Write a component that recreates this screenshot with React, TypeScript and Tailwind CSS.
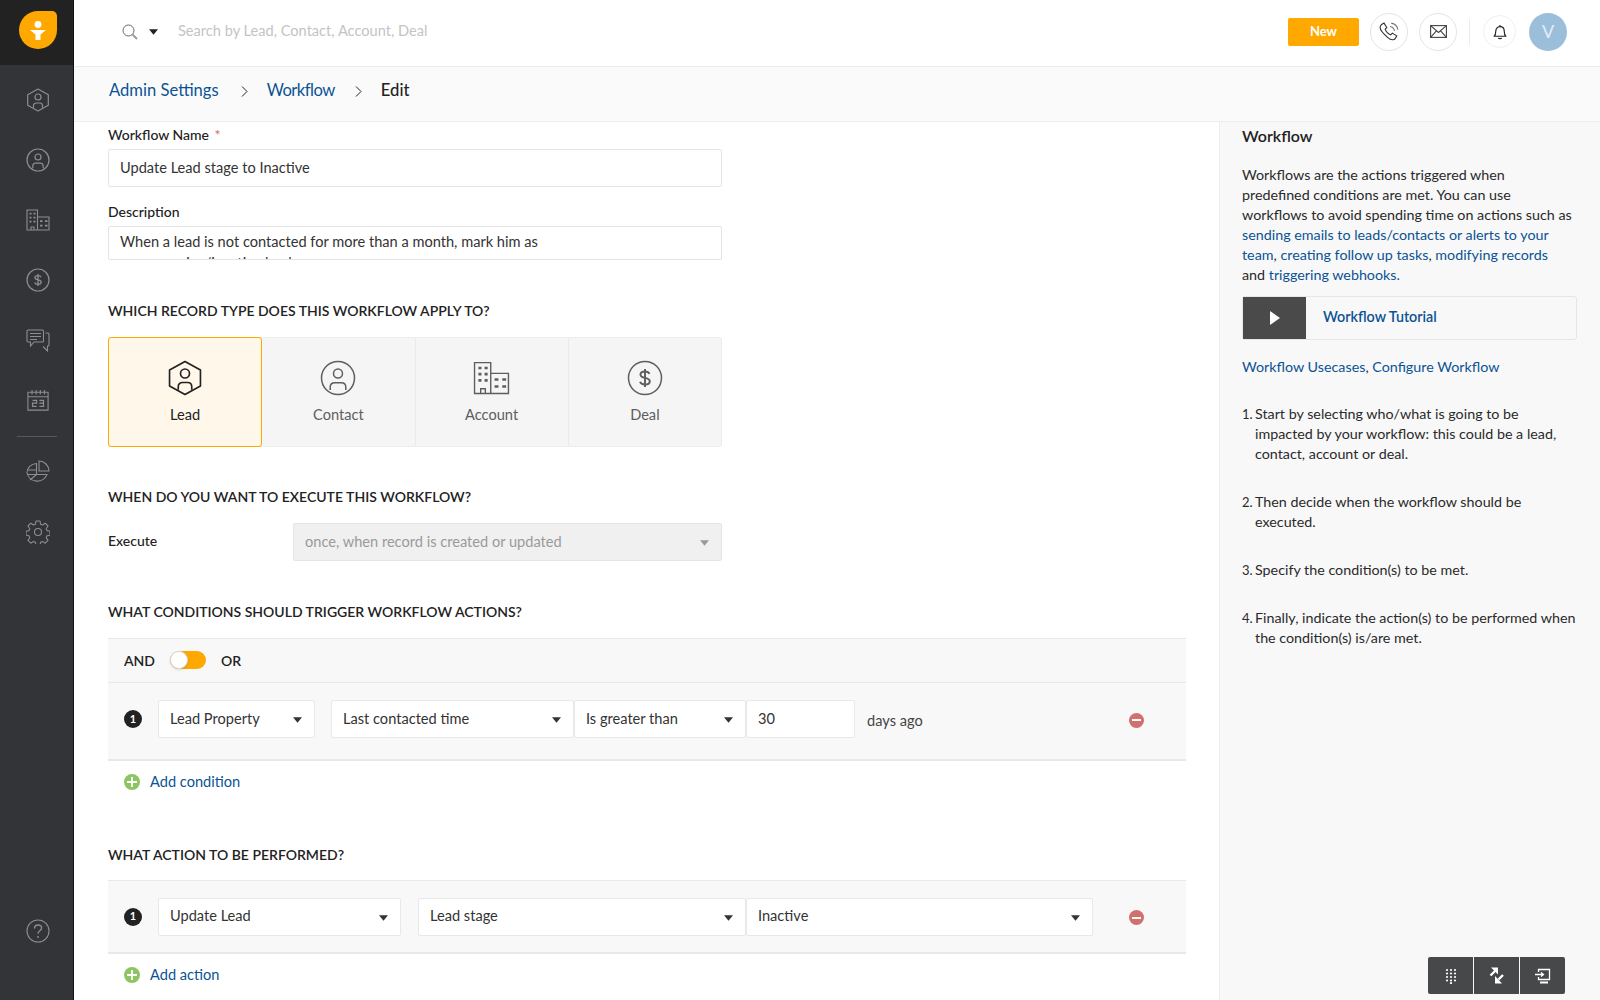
import React from "react";

const Caret = ({ className = "" }: { className?: string }) => (
  <svg width="9" height="6" viewBox="0 0 10 6" className={className}>
    <path d="M0 0h10L5 6z" fill="currentColor" />
  </svg>
);

const LeadIcon = ({ size = 24, stroke = "currentColor", sw = 1.2 }: { size?: number; stroke?: string; sw?: number }) => (
  <svg width={size} height={size} viewBox="0 0 24 24" fill="none" stroke={stroke} strokeWidth={sw}>
    <path d="M12 1l10.300 5.700v10.600L12 23 1.700 17.300V6.700z" strokeLinejoin="round" />
    <circle cx="12" cy="9" r="3" />
    <path d="M7.500 19.800v-2c0-1.700 1.200-2.800 2.800-2.800h3.400c1.600 0 2.800 1.100 2.800 2.800v2" />
  </svg>
);

const ContactIcon = ({ size = 24, stroke = "currentColor", sw = 1.2 }: { size?: number; stroke?: string; sw?: number }) => (
  <svg width={size} height={size} viewBox="0 0 24 24" fill="none" stroke={stroke} strokeWidth={sw}>
    <circle cx="12" cy="12" r="11" />
    <circle cx="12" cy="9" r="3" />
    <path d="M6.800 20v-1.800c0-1.800 1.300-3 3-3h4.400c1.700 0 3 1.200 3 3V20" />
  </svg>
);

const AccountIcon = ({ size = 24, stroke = "currentColor", sw = 1.1 }: { size?: number; stroke?: string; sw?: number }) => (
  <svg width={size} height={size * 0.92} viewBox="0 0 24 22" fill="none" stroke={stroke} strokeWidth={sw}>
    <path d="M1 21V1h10.500v20zM11.500 8H23v13H11.500z" />
    <path d="M5 21v-3h3v3" />
    <path d="M3.500 4.500h2M7.500 4.500h2M3.500 8.500h2M7.500 8.500h2M3.500 12.500h2M7.500 12.500h2M14 12h2.500M19 12h2.500M14 16.500h2.500M19 16.500h2.500" strokeWidth={1.7} />
  </svg>
);

const DealIcon = ({ size = 24, stroke = "currentColor", sw = 1.2 }: { size?: number; stroke?: string; sw?: number }) => (
  <svg width={size} height={size} viewBox="0 0 24 24" fill="none" stroke={stroke} strokeWidth={sw}>
    <circle cx="12" cy="12" r="11" />
    <path d="M15 9.300c-.4-1-1.400-1.600-3-1.600-1.800 0-3 .8-3 2.100 0 2.900 6.200 1.300 6.200 4.300 0 1.400-1.300 2.200-3.200 2.200-1.700 0-2.900-.7-3.300-1.800M12 6v12" strokeWidth={1.300} />
  </svg>
);

const ChatIcon = () => (
  <svg width="24" height="23" viewBox="0 0 24 23" fill="none" stroke="#8c8e90" strokeWidth="1.100">
    <path d="M2 1h14.500a1 1 0 0 1 1 1v10a1 1 0 0 1-1 1H8l-3.500 4v-4H2a1 1 0 0 1-1-1V2a1 1 0 0 1 1-1z" />
    <path d="M4 4.500h11M4 7.500h11M4 10.500h7" />
    <path d="M19.500 4H22a1 1 0 0 1 1 1v11a1 1 0 0 1-1 1h-.5v5L17 17.500" />
  </svg>
);

const CalendarIcon = () => (
  <svg width="22" height="22" viewBox="0 0 24 24" fill="none" stroke="#8c8e90" strokeWidth="1.200">
    <path d="M1 3.500h22V23H1zM1 8.500h22" />
    <path d="M5.500 1v5M10 1v5M14.500 1v5M19 1v5" />
    <path d="M6 12.500h4.500v3H6v3.500h4.500M13.500 12.500H18V19h-4.500M13.500 15.500H18" strokeWidth="1.300" />
  </svg>
);

const PieIcon = () => (
  <svg width="24" height="24" viewBox="0 0 24 24" fill="none" stroke="#8c8e90" strokeWidth="1.100">
    <path d="M13 1c5.500.2 9.800 4.500 10 10H13z" />
    <path d="M10.500 3.500C5 3.800 1 8 1 13a10.500 10.500 0 0 0 20 1.500H10.500z" />
    <path d="M1.500 10h9M1.500 14.500h9M4 20l6.500-5.500" />
  </svg>
);

const GearIcon = () => (
  <svg width="24" height="24" viewBox="0 0 24 24" fill="none" stroke="#8c8e90" strokeWidth="1.100">
    <circle cx="12" cy="12" r="3.500" />
    <path d="M10 1h4l.6 3.200 1.900.8 2.700-1.800 2.800 2.800-1.800 2.700.8 1.900 3 .6v4l-3 .6-.8 1.900 1.800 2.700-2.800 2.800-2.700-1.800-1.900.8-.6 3.200h-4l-.6-3.200-1.900-.8-2.700 1.800-2.800-2.800 1.800-2.700-.8-1.900-3-.6v-4l3-.6.8-1.900L2 6l2.800-2.800L7.500 5l1.900-.8z" strokeLinejoin="round" />
  </svg>
);

const HelpIcon = () => (
  <svg width="24" height="24" viewBox="0 0 24 24" fill="none" stroke="#8c8e90" strokeWidth="1.100">
    <circle cx="12" cy="12" r="11" />
    <path d="M8.500 9.500c0-2.200 1.500-3.500 3.600-3.500 2 0 3.500 1.200 3.500 3 0 2.800-3.600 2.800-3.600 5.800" strokeWidth="1.300" />
    <circle cx="12" cy="18" r=".9" fill="#8c8e90" stroke="none" />
  </svg>
);

const Logo = () => (
  <div className="w-[38px] h-[38px] bg-[#ffa800] rounded-tl-[19px] rounded-bl-[19px] rounded-br-[19px] rounded-tr-[5px] flex items-center justify-center">
    <svg width="16" height="19" viewBox="0 0 16 19" fill="white">
      <circle cx="8" cy="3.500" r="3.400" />
      <path d="M0 9h16l-5.500 4.500V19h-5v-5.500z" />
    </svg>
  </div>
);

const Select = ({ text, className = "", muted = false }: { text: string; className?: string; muted?: boolean }) => (
  <div className={`h-[38px] flex items-center justify-between pl-[11px] pr-[12px] border rounded-[2px] text-[14.600px] ${muted ? "bg-[#f0f0f0] border-[#e4e4e4] text-[#9a9a9a]" : "bg-white border-[#e8e8e8] text-[#333]"} ${className}`}>
    <span className="pb-[1px]">{text}</span>
    <Caret className={`mt-[2px] ${muted ? "text-[#9a9a9a]" : "text-[#333]"}`} />
  </div>
);

const Badge = () => (
  <div className="w-[18px] h-[18px] shrink-0 rounded-full bg-[#222] text-white text-[11px] font-bold flex items-center justify-center">1</div>
);

const Minus = () => (
  <div className="w-[15px] h-[15px] rounded-full bg-[#d26f6f] flex items-center justify-center">
    <div className="w-[9px] h-[2px] bg-white" />
  </div>
);

const AddLink = ({ text }: { text: string }) => (
  <div className="flex items-center gap-[10px] pl-[16px]">
    <div className="relative w-[16px] h-[16px] rounded-full bg-[#8cc561]">
      <div className="absolute left-[3px] top-[7px] w-[10px] h-[2px] bg-white" />
      <div className="absolute left-[7px] top-[3px] w-[2px] h-[10px] bg-white" />
    </div>
    <span className="text-[14.600px] text-[#0b5394]">{text}</span>
  </div>
);

const Heading = ({ children, className = "" }: { children: React.ReactNode; className?: string }) => (
  <div className={`text-[14px] leading-[20px] font-semibold text-[#222] ${className}`}>{children}</div>
);

const navTop = [
  <LeadIcon key="l" stroke="#8c8e90" />,
  <ContactIcon key="c" stroke="#8c8e90" />,
  <AccountIcon key="a" stroke="#8c8e90" />,
  <DealIcon key="d" stroke="#8c8e90" />,
  <ChatIcon key="m" />,
  <CalendarIcon key="e" />,
];

const records = [
  { name: "Lead", icon: <LeadIcon size={36} sw={1.100} />, on: true },
  { name: "Contact", icon: <ContactIcon size={36} sw={1} />, on: false },
  { name: "Account", icon: <AccountIcon size={37} sw={0.9} />, on: false },
  { name: "Deal", icon: <DealIcon size={36} sw={1} />, on: false },
];

const steps = [
  { t: "Start by selecting who/what is going to be impacted by your workflow: this could be a lead, contact, account or deal." },
  { t: "Then decide when the workflow should be executed." },
  { t: "Specify the condition(s) to be met." },
  { t: "Finally, indicate the action(s) to be performed when the condition(s) is/are met." },
];

export default function App() {
  return (
    <div className="flex h-[1000px] w-[1600px] overflow-hidden bg-white text-[#222] font-['Lato','Open_Sans',sans-serif]">
      {/* sidebar */}
      <div className="w-[74px] shrink-0 h-full bg-[#323437] border-r border-[#111] flex flex-col items-center">
        <div className="h-[65px] w-full bg-[#222222] flex items-center justify-center pl-[2px] pb-[5px]">
          <Logo />
        </div>
        <div className="flex flex-col items-center mt-[5px] pl-[2px]">
          {navTop.map((icon, i) => (
            <div key={i} className="h-[60px] flex items-center justify-center">{icon}</div>
          ))}
        </div>
        <div className="w-[40px] h-px bg-[#56585a] mt-[6px]" />
        <div className="h-[60px] mt-[5px] pl-[2px] flex items-center"><PieIcon /></div>
        <div className="h-[60px] pl-[2px] flex items-center"><GearIcon /></div>
        <div className="mt-auto mb-[57px] pl-[2px]"><HelpIcon /></div>
      </div>

      <div className="flex-1 min-w-0 flex flex-col">
        {/* top bar */}
        <div className="h-[67px] shrink-0 border-b border-[#eeeeee] flex items-center pl-[48px] pr-[33px] pb-[3px]">
          <svg width="16" height="16" viewBox="0 0 16 16" fill="none" stroke="#666" strokeWidth="1">
            <circle cx="6.500" cy="6.500" r="5.500" />
            <path d="M10.500 10.500l4.500 4.500" strokeWidth="1.800" stroke="#999" />
          </svg>
          <Caret className="ml-[11px] text-[#222]" />
          <span className="ml-[20px] pb-[1px] text-[14.600px] text-[#c4c4c4]">Search by Lead, Contact, Account, Deal</span>
          <div className="ml-auto w-[71px] h-[28px] bg-[#ffa800] rounded-[2px] text-white text-[13px] font-bold flex items-center justify-center">New</div>
          <div className="ml-[11px] w-[38px] h-[38px] rounded-full border border-[#e4e4e4] flex items-center justify-center">
            <svg width="20" height="20" viewBox="0 0 18 18" fill="none" stroke="#333" strokeWidth="1">
              <path d="M2 2.500L4.500 1l2.500 4-1.500 1.500c.5 2 3 4.500 5 5L12 10l4 2.500-1.500 2.500c-1 1.500-3.500 1.500-6.500-1S1 7 1 5c0-1 .3-1.800 1-2.500z" />
              <path d="M10 4c2 .3 3.500 1.800 4 4M11 1c3 .5 5.500 3 6 6" stroke="#777" />
            </svg>
          </div>
          <div className="ml-[11px] w-[38px] h-[38px] rounded-full border border-[#e4e4e4] flex items-center justify-center">
            <svg width="17" height="13" viewBox="0 0 17 13" fill="none" stroke="#444" strokeWidth="1.100">
              <rect x=".6" y=".6" width="15.800" height="11.800" />
              <path d="M.6.6l7.900 6.800L16.400.6M.6 12.400l5.800-6.500M16.400 12.400l-5.800-6.500" />
            </svg>
          </div>
          <div className="ml-[12px] w-px h-[26px] bg-[#ececec]" />
          <div className="ml-[13px] w-[33px] h-[33px] rounded-full border border-[#efefef] flex items-center justify-center">
            <svg width="14" height="16" viewBox="0 0 13 15" fill="none" stroke="#222" strokeWidth="1.100">
              <path d="M1 11.500c1.200-1 1.500-2 1.500-4.500 0-2.500 1.500-4.500 4-4.500s4 2 4 4.500c0 2.500.3 3.500 1.500 4.500z" strokeLinejoin="round" />
              <path d="M5 13c.3 1 2.700 1 3 0M6.500 2.500V1" />
            </svg>
          </div>
          <div className="ml-[13px] w-[38px] h-[38px] rounded-full bg-[#9bbedb] text-[#e3edf5] text-[18px] flex items-center justify-center">V</div>
        </div>

        {/* breadcrumb */}
        <div className="h-[55px] shrink-0 bg-[#fafafa] border-b border-[#eeeeee] flex items-center pl-[35px] text-[16.600px] pb-[7px]">
          <span className="text-[#0b5394]">Admin Settings</span>
          <svg width="7" height="11" viewBox="0 0 7 11" fill="none" stroke="#222" className="ml-[22px] mr-[19px] mt-[2px]"><path d="M1 .5l5 5-5 5" /></svg>
          <span className="text-[#0b5394] tracking-[-0.5px]">Workflow</span>
          <svg width="7" height="11" viewBox="0 0 7 11" fill="none" stroke="#222" className="ml-[20px] mr-[19px] mt-[2px]"><path d="M1 .5l5 5-5 5" /></svg>
          <span className="text-[#222] font-medium">Edit</span>
        </div>

        <div className="flex-1 min-h-0 flex">
          {/* form */}
          <div className="flex-1 min-w-0 pl-[34px] pr-[33px] overflow-hidden">
            <div className="w-[614px]">
              <div className="mt-[3px] h-[20px] text-[14px] leading-[20px] font-medium">
                Workflow Name <span className="text-[#d26f6f] ml-[2px]">*</span>
              </div>
              <div className="mt-[4px] h-[38px] border border-[#e4e4e4] rounded-[2px] flex items-center pl-[11px] pb-[1px] text-[14.600px] text-[#333]">
                Update Lead stage to Inactive
              </div>
              <div className="mt-[15px] h-[20px] text-[14px] leading-[20px] font-medium">Description</div>
              <div className="mt-[4px] h-[34px] border border-[#e4e4e4] rounded-[2px] overflow-hidden pl-[11px] pr-[100px] pt-[4px] text-[14.600px] leading-[21px] text-[#333]">
                When a lead is not contacted for more than a month, mark him as unresponsive/inactive lead
              </div>

              <Heading className="mt-[41px]">WHICH RECORD TYPE DOES THIS WORKFLOW APPLY TO?</Heading>
              <div className="mt-[16px] h-[110px] flex rounded-[3px] bg-[#f5f5f5] border border-[#ececec]">
                {records.map((r) => (
                  <div
                    key={r.name}
                    className={`flex-1 flex flex-col items-center pt-[22px] ${
                      r.on
                        ? "bg-[#fff8ea] border border-[#ffa800] rounded-[3px] -my-px -ml-px text-[#222]"
                        : "border-r border-[#eaeaea] last:border-r-0 text-[#5e5e5e]"
                    }`}
                  >
                    <div className="h-[36px] flex items-center">{r.icon}</div>
                    <div className="mt-[8px] text-[14.600px] leading-[22px]">{r.name}</div>
                  </div>
                ))}
              </div>

              <Heading className="mt-[40px]">WHEN DO YOU WANT TO EXECUTE THIS WORKFLOW?</Heading>
              <div className="mt-[16px] flex items-center">
                <div className="w-[185px] text-[14px] font-medium pb-[3px]">Execute</div>
                <Select muted text="once, when record is created or updated" className="flex-1" />
              </div>
            </div>

            <Heading className="mt-[41px]">WHAT CONDITIONS SHOULD TRIGGER WORKFLOW ACTIONS?</Heading>
            <div className="mt-[16px] w-[1078px] bg-[#f8f8f8] border-t border-b-2 border-[#e8e8e8]">
              <div className="h-[44px] flex items-center pl-[16px] pb-[1px] border-b border-[#e8e8e8] text-[14px] font-semibold">
                <span>AND</span>
                <div className="relative ml-[15px] w-[36px] h-[18px] rounded-full bg-[#ffa800]">
                  <div className="absolute left-0 top-0 w-[18px] h-[18px] rounded-full bg-white border border-[#ddd] shadow-sm" />
                </div>
                <span className="ml-[15px]">OR</span>
              </div>
              <div className="h-[76px] flex items-center pl-[16px] pb-[4px]">
                <Badge />
                <Select text="Lead Property" className="ml-[16px] w-[157px]" />
                <Select text="Last contacted time" className="ml-[16px] w-[243px]" />
                <Select text="Is greater than" className="w-[172px]" />
                <div className="w-[109px] h-[38px] bg-white border border-[#e8e8e8] rounded-[2px] flex items-center pl-[11px] pb-[1px] text-[14.600px] text-[#333]">30</div>
                <span className="ml-[12px] mt-[3px] text-[14.600px] text-[#444]">days ago</span>
                <div className="ml-auto mr-[42px] mt-[2px]"><Minus /></div>
              </div>
            </div>
            <div className="mt-[10px] h-[22px]"><AddLink text="Add condition" /></div>

            <Heading className="mt-[52px]">WHAT ACTION TO BE PERFORMED?</Heading>
            <div className="mt-[15px] w-[1078px] h-[74px] bg-[#f8f8f8] border-t border-b-2 border-[#e8e8e8] flex items-center pl-[16px]">
              <Badge />
              <Select text="Update Lead" className="ml-[16px] w-[243px]" />
              <Select text="Lead stage" className="ml-[17px] w-[328px]" />
              <Select text="Inactive" className="w-[347px]" />
              <div className="ml-auto mr-[42px] mt-[2px]"><Minus /></div>
            </div>
            <div className="mt-[10px] h-[22px]"><AddLink text="Add action" /></div>
          </div>

          {/* help panel */}
          <div className="relative w-[381px] shrink-0 bg-[#f8f8f8] border-l border-[#eeeeee] pl-[22px] pr-[20px] text-[14.300px] leading-[20px] text-[#2a2a2a]">
            <div className="mt-[2px] h-[24px] text-[16px] leading-[24px] font-semibold text-[#222]">Workflow</div>
            <p className="mt-[17px]">
              Workflows are the actions triggered when<br />
              predefined conditions are met. You can use<br />
              workflows to avoid spending time on actions such as<br />
              <span className="text-[#0b5394]">sending emails to leads/contacts or alerts to your</span><br />
              <span className="text-[#0b5394]">team</span>,{" "}
              <span className="text-[#0b5394]">creating follow up tasks</span>,{" "}
              <span className="text-[#0b5394]">modifying records</span><br />
              and <span className="text-[#0b5394]">triggering webhooks.</span>
            </p>
            <div className="mt-[11px] w-[335px] h-[44px] flex items-center border border-[#e6e6e6] rounded-[3px]">
              <div className="w-[63px] h-full bg-[#4a4a4a] flex items-center justify-center">
                <svg width="10" height="14" viewBox="0 0 10 14" fill="white"><path d="M0 0l10 7-10 7z" /></svg>
              </div>
              <span className="ml-[17px] pb-[2px] font-semibold text-[#0b5394]">Workflow Tutorial</span>
            </div>
            <div className="mt-[17px]">
              <span className="text-[#0b5394]">Workflow Usecases</span>, <span className="text-[#0b5394]">Configure Workflow</span>
            </div>
            <ol className="mt-[27px]">
              {steps.map((s, i) => (
                <li key={i} className="flex mb-[28px]">
                  <span className="w-[13px] shrink-0 pr-[3px] text-right text-[13px]">{i + 1}.</span>
                  <span>{s.t}</span>
                </li>
              ))}
            </ol>
            <div className="absolute right-[35px] bottom-[6px] flex gap-px">
              <div className="w-[45px] h-[37px] bg-[#474849] rounded-l-[2px] flex items-center justify-center">
                <svg width="12" height="16" viewBox="0 0 12 16" fill="white">
                  {[0, 1, 2, 3].map((r) => [0, 1, 2].map((c) => <circle key={`${r}${c}`} cx={2 + c * 4} cy={2 + r * 3.500} r="1.100" />))}
                  <circle cx="6" cy="15" r="1.100" />
                </svg>
              </div>
              <div className="w-[45px] h-[37px] bg-[#474849] flex items-center justify-center">
                <svg width="15" height="17" viewBox="0 0 15 17" fill="white">
                  <path d="M2 .5h7v7z" />
                  <path d="M6 4L1.500 8.500" stroke="white" strokeWidth="2.400" />
                  <path d="M6 9v7.500h7z" />
                  <path d="M9.500 12.500L14 8" stroke="white" strokeWidth="2.400" />
                </svg>
              </div>
              <div className="w-[45px] h-[37px] bg-[#474849] rounded-r-[2px] flex items-center justify-center">
                <svg width="16" height="16" viewBox="0 0 16 16" fill="none" stroke="white" strokeWidth="1.300">
                  <path d="M3.500 4V1.500h11v10h-11V9" />
                  <path d="M0 6.500h8M6 4.500l2.500 2-2.500 2" />
                  <path d="M5 14.500h8" strokeWidth="2" />
                </svg>
              </div>
            </div>
          </div>
        </div>
      </div>
    </div>
  );
}
